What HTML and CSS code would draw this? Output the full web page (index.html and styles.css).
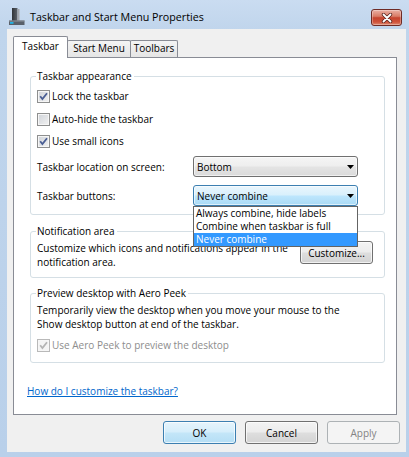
FILE: index.html
```html
<!DOCTYPE html>
<html lang="en">
<head>
<meta charset="utf-8">
<title>Taskbar and Start Menu Properties</title>
<link rel="stylesheet" href="styles.css">
</head>
<body>
<div class="window">
  <div class="titlebar">
    <svg class="app-icon" width="16" height="17" viewBox="0 0 16 17">
      <defs>
        <linearGradient id="tower" x1="0" y1="0" x2="1" y2="0">
          <stop offset="0" stop-color="#2f3338"/>
          <stop offset="1" stop-color="#5d636b"/>
        </linearGradient>
      </defs>
      <rect x="3" y="0" width="5.5" height="14" fill="url(#tower)"/>
      <rect x="8.5" y="1" width="2" height="13" fill="#a3a8ae"/>
      <rect x="0" y="12.5" width="15.5" height="4.5" fill="#59606a"/>
      <rect x="0" y="12.5" width="15.5" height="1" fill="#8d949c"/>
      <rect x="1" y="14" width="3.5" height="1.8" fill="#21b3e6"/>
    </svg>
    <span class="title">Taskbar and Start Menu Properties</span>
    <button class="close" type="button" aria-label="Close">
      <svg width="12" height="10" viewBox="0 0 12 10">
        <path d="M2.5 1.5 L9.5 8.5 M9.5 1.5 L2.5 8.5" stroke="#5b2620" stroke-width="3.4" stroke-linecap="round"/>
        <path d="M2.5 1.5 L9.5 8.5 M9.5 1.5 L2.5 8.5" stroke="#ffffff" stroke-width="1.8" stroke-linecap="round"/>
      </svg>
    </button>
  </div>

  <div class="client">
    <div class="tabs">
      <div class="tab tab-selected">Taskbar</div>
      <div class="tab tab-start">Start Menu</div>
      <div class="tab tab-toolbars">Toolbars</div>
    </div>

    <div class="panel">
      <fieldset class="group group-appearance">
        <legend>Taskbar appearance</legend>
        <label class="check">
          <span class="box"><svg width="11" height="11" viewBox="0 0 11 11"><path d="M2.2 5.3 L4.4 8 L9 2.2" fill="none" stroke="#4a5e94" stroke-width="1.8"/></svg></span>
          Lock the taskbar
        </label>
        <label class="check check-2">
          <span class="box"></span>
          Auto-hide the taskbar
        </label>
        <label class="check check-3">
          <span class="box"><svg width="11" height="11" viewBox="0 0 11 11"><path d="M2.2 5.3 L4.4 8 L9 2.2" fill="none" stroke="#4a5e94" stroke-width="1.8"/></svg></span>
          Use small icons
        </label>
        <div class="field">
          <span>Taskbar location on screen:</span>
          <div class="combo">
            <span>Bottom</span>
            <svg class="arrow" width="7" height="4" viewBox="0 0 7 4"><path d="M0 0 H7 L3.5 4 Z" fill="#000"/></svg>
          </div>
        </div>
        <div class="field">
          <span>Taskbar buttons:</span>
          <div class="combo combo-hot">
            <span>Never combine</span>
            <svg class="arrow" width="7" height="4" viewBox="0 0 7 4"><path d="M0 0 H7 L3.5 4 Z" fill="#000"/></svg>
            <ul class="dropdown">
              <li>Always combine, hide labels</li>
              <li>Combine when taskbar is full</li>
              <li class="selected">Never combine</li>
            </ul>
          </div>
        </div>
      </fieldset>

      <fieldset class="group group-notify">
        <legend>Notification area</legend>
        <div class="notify">
          <p>Customize which icons and notifications appear in the<br>notification area.</p>
          <button class="btn btn-customize" type="button">Customize...</button>
        </div>
      </fieldset>

      <fieldset class="group group-peek">
        <legend>Preview desktop with Aero Peek</legend>
        <p class="peek-text">Temporarily view the desktop when you move your mouse to the<br>Show desktop button at end of the taskbar.</p>
        <label class="check check-disabled">
          <span class="box"><svg width="11" height="11" viewBox="0 0 11 11"><path d="M2.2 5.3 L4.4 8 L9 2.2" fill="none" stroke="#b4b4b4" stroke-width="1.8"/></svg></span>
          Use Aero Peek to preview the desktop
        </label>
      </fieldset>

      <a class="help-link" href="#">How do I customize the taskbar?</a>
    </div>

    <div class="buttons">
      <button class="btn btn-default" type="button">OK</button>
      <button class="btn" type="button">Cancel</button>
      <button class="btn" type="button" disabled>Apply</button>
    </div>
  </div>
</div>
</body>
</html>
```

FILE: styles.css
```css
* {
  box-sizing: border-box;
}

html,
body {
  margin: 0;
  padding: 0;
}

body {
  width: 409px;
  height: 457px;
  overflow: hidden;
  background: #bcd2ea;
  font-family: "Open Sans", "Noto Sans", sans-serif;
  font-size: 10px;
  line-height: 14px;
  color: #000;
}

.window {
  display: flex;
  flex-direction: column;
  height: 457px;
  background: linear-gradient(180deg, #cadcf1 0px, #c0d5ec 30px, #b9d0ea 100%);
}

/* ---------- title bar ---------- */
.titlebar {
  flex: none;
  height: 29px;
  display: flex;
  align-items: flex-start;
  padding: 0 7px 0 9px;
}

.app-icon {
  flex: none;
  margin-top: 8px;
}

.title {
  flex: 1;
  margin: 10px 0 0 5px;
  font-size: 10.7px;
  line-height: 15px;
}

.close {
  flex: none;
  margin-top: 9px;
  width: 31px;
  height: 17px;
  padding: 0;
  border: 1px solid #6e2b25;
  border-radius: 3px;
  background: linear-gradient(180deg, #eab0a4 0%, #d97b66 42%, #c5432e 52%, #cf533b 80%, #de8a72 100%);
  box-shadow: inset 0 0 0 1px rgba(255, 255, 255, 0.3);
  display: flex;
  align-items: center;
  justify-content: center;
}

/* ---------- client area ---------- */
.client {
  flex: 1;
  margin: 0 3px 5px 7px;
  padding-top: 7px;
  background: #f0f0f0;
  display: flex;
  flex-direction: column;
}

.tabs {
  flex: none;
  height: 22px;
  margin-left: 6px;
  display: flex;
  align-items: flex-end;
}

.tab {
  height: 18px;
  margin-left: -1px;
  border: 1px solid #898c95;
  border-bottom: none;
  border-radius: 2px 2px 0 0;
  background: linear-gradient(180deg, #f4f4f4, #e4e4e4);
  text-align: center;
}

.tab-selected {
  position: relative;
  z-index: 1;
  width: 55px;
  height: 22px;
  margin-left: 0;
  padding-top: 2px;
  background: #fff;
}

.tab-start {
  width: 64px;
}

.tab-toolbars {
  width: 48px;
}

.panel {
  flex: none;
  height: 358px;
  margin: -1px 9px 0 6px;
  padding: 11px 11px 0 16px;
  border: 1px solid #898c95;
  background: #fff;
}

/* ---------- group boxes ---------- */
.group {
  margin: 0;
  min-width: 0;
  padding: 6px 6px 8px;
  border: 1px solid #d5dfe5;
  border-radius: 3px;
}

.group legend {
  margin-left: -1px;
  padding: 0 2px 0 1px;
  line-height: 14px;
}

.group-notify {
  margin-top: 9px;
  padding-top: 3px;
  padding-bottom: 8px;
}

.group-peek {
  margin-top: 8px;
  padding-top: 3px;
  padding-bottom: 10px;
}

/* ---------- check boxes ---------- */
.check {
  display: flex;
  align-items: center;
  gap: 2px;
  height: 14px;
}

.check-2 {
  margin-top: 9px;
}

.check-3 {
  margin-top: 8px;
}

.box {
  flex: none;
  width: 13px;
  height: 13px;
  border: 1px solid #8e8f8f;
  background: linear-gradient(135deg, #cfd3d9 0%, #f2f2f2 100%);
  box-shadow: inset 0 0 0 1px #f6f6f6;
  display: flex;
}

.check-disabled {
  margin-top: 7px;
  color: #8d8d8d;
}

.check-disabled .box {
  border-color: #b9b9b9;
  background: #f4f4f4;
}

/* ---------- combo boxes ---------- */
.field {
  display: grid;
  grid-template-columns: 156px 165px;
  align-items: center;
  margin-top: 8px;
}

.combo {
  position: relative;
  height: 21px;
  padding-left: 3px;
  border: 1px solid #707070;
  border-radius: 3px;
  background: linear-gradient(180deg, #f5f5f5 0%, #eeeeee 48%, #e4e4e4 52%, #dadada 100%);
  box-shadow: inset 0 0 0 1px rgba(255, 255, 255, 0.6);
  display: flex;
  align-items: center;
}

.combo-hot {
  border-color: #3c7fb1;
  background: linear-gradient(180deg, #eaf6fd 0%, #d9f0fc 48%, #bee6fd 52%, #a9daf5 100%);
}

.arrow {
  margin-left: auto;
  margin-right: 3px;
}

.dropdown {
  position: absolute;
  z-index: 2;
  top: 20px;
  left: -1px;
  right: -1px;
  margin: 0;
  padding: 0;
  list-style: none;
  border: 1px solid #646464;
  background: #fff;
}

.dropdown li {
  height: 13px;
  padding-left: 2px;
  line-height: 13px;
}

.dropdown li.selected {
  background: #3399ff;
  color: #fff;
}

/* ---------- notification & peek ---------- */
.notify {
  display: flex;
  align-items: flex-start;
}

.notify p,
.peek-text {
  margin: 0;
}

.notify p {
  flex: 1;
}

.btn-customize {
  margin-right: 5px;
}

.help-link {
  display: block;
  width: max-content;
  margin: 21px 0 0 -3px;
  color: #0066cc;
  text-decoration: underline;
}

/* ---------- buttons ---------- */
.buttons {
  display: flex;
  justify-content: flex-end;
  gap: 9px;
  margin-top: 6px;
  padding-right: 6px;
}

.btn {
  flex: none;
  width: 73px;
  height: 23px;
  padding: 0;
  border: 1px solid #707070;
  border-radius: 3px;
  background: linear-gradient(180deg, #f3f3f3 0%, #ececec 48%, #dedede 52%, #d3d3d3 100%);
  box-shadow: inset 0 0 0 1px rgba(255, 255, 255, 0.7);
  font: inherit;
  line-height: 14px;
  color: #000;
}

.btn-default {
  border-color: #3c7fb1;
  background: linear-gradient(180deg, #e6f4fc 0%, #d6eefb 48%, #c4e6f8 52%, #b5def5 100%);
}

.btn:disabled {
  border-color: #adb2b5;
  background: #f4f4f4;
  box-shadow: none;
  color: #838383;
}
```
